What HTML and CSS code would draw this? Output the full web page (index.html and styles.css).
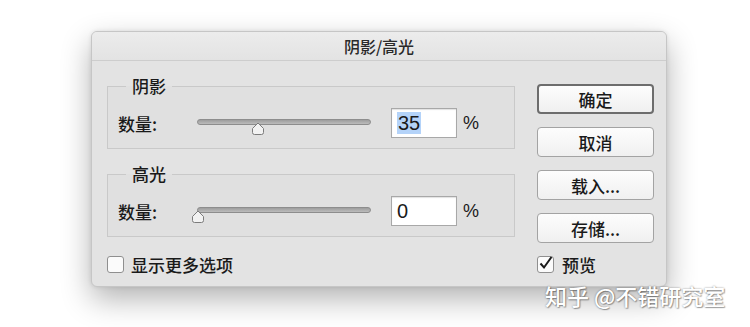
FILE: index.html
```html
<!DOCTYPE html>
<html lang="zh-CN">
<head>
    <meta charset="UTF-8">
    <title>阴影/高光</title>
    <link rel="stylesheet" href="styles.css">
</head>
<body>
    <div class="dialog">
        <div class="titlebar">阴影/高光</div>
        <div class="content">
            <div class="left">
                <fieldset class="group">
                    <legend>阴影</legend>
                    <div class="row">
                        <span class="label">数量:</span>
                        <div class="slider">
                            <div class="track"></div>
                            <svg class="thumb" style="left: 54.4px" width="14" height="14" viewBox="0 0 14 14">
                                <path d="M7 1 L12.5 6.5 V10.5 Q12.5 12.5 10.5 12.5 H3.5 Q1.5 12.5 1.5 10.5 V6.5 Z" fill="#f2f2f2" stroke="#7c7c7c" stroke-width="1"/>
                            </svg>
                        </div>
                        <div class="field"><span class="sel">35</span></div>
                        <span class="pct">%</span>
                    </div>
                </fieldset>

                <fieldset class="group second">
                    <legend>高光</legend>
                    <div class="row">
                        <span class="label">数量:</span>
                        <div class="slider">
                            <div class="track"></div>
                            <svg class="thumb" style="left: -6.5px" width="14" height="14" viewBox="0 0 14 14">
                                <path d="M7 1 L12.5 6.5 V10.5 Q12.5 12.5 10.5 12.5 H3.5 Q1.5 12.5 1.5 10.5 V6.5 Z" fill="#f2f2f2" stroke="#7c7c7c" stroke-width="1"/>
                            </svg>
                        </div>
                        <div class="field">0</div>
                        <span class="pct">%</span>
                    </div>
                </fieldset>

                <div class="check more">
                    <span class="box"></span>
                    <span>显示更多选项</span>
                </div>
            </div>

            <div class="right">
                <button class="btn default">确定</button>
                <button class="btn">取消</button>
                <button class="btn">载入...</button>
                <button class="btn">存储...</button>
                <div class="check preview">
                    <span class="box checked">
                        <svg width="17" height="17" viewBox="0 0 17 17">
                            <path d="M3.5 8.5 L7 12.5 L14.5 2" fill="none" stroke="#1a1a1a" stroke-width="2"/>
                        </svg>
                    </span>
                    <span>预览</span>
                </div>
            </div>
        </div>
    </div>

    <div class="watermark">知乎 @不错研究室</div>
</body>
</html>
```

FILE: styles.css
```css
body {
    margin: 0;
    height: 327px;
    overflow: hidden;
    background: #ffffff;
    font-family: "Noto Sans CJK SC", "Liberation Sans", sans-serif;
    font-weight: 500;
    color: #1a1a1a;
    position: relative;
}

.dialog {
    margin: 31px 0 0 91px;
    width: 576px;
    height: 256px;
    box-sizing: border-box;
    background: #e3e3e3;
    border: 1px solid #c6c6c6;
    border-radius: 6px;
    box-shadow: 0 12px 30px rgba(0, 0, 0, 0.3), 0 0 4px rgba(0, 0, 0, 0.1);
    overflow: hidden;
}

.titlebar {
    height: 28px;
    line-height: 28px;
    text-align: center;
    font-size: 16px;
    color: #2a2a2a;
    background: linear-gradient(#ececec, #e3e3e3);
    border-bottom: 1px solid #cdcdcd;
}

.content {
    display: flex;
    padding: 15px 0 0 15px;
}

.left {
    width: 408px;
}

.group {
    margin: 0;
    padding: 12px 0 10px 10px;
    border: 1px solid #c9c9c9;
    background: #e0e0e0;
}

.group.second {
    margin-top: 15px;
}

.group legend {
    margin-left: 8px;
    padding: 0 6px;
    font-size: 17px;
    line-height: 20px;
}

.row {
    display: flex;
    align-items: center;
    height: 30px;
}

.label {
    width: 79px;
    font-size: 17px;
}

.slider {
    position: relative;
    width: 174px;
    height: 30px;
}

.track {
    position: absolute;
    left: 0;
    right: 0;
    top: 11px;
    height: 6px;
    box-sizing: border-box;
    border: 1px solid #8d8d8d;
    border-radius: 3px;
    background: linear-gradient(#9d9d9d, #bcbcbc);
}

.thumb {
    position: absolute;
    top: 14px;
}

.field {
    margin-left: 20px;
    width: 66px;
    height: 30px;
    box-sizing: border-box;
    padding-left: 5px;
    border: 1px solid #a8a8a8;
    box-shadow: inset 0 1px 1px rgba(0, 0, 0, 0.12);
    background: #ffffff;
    font-family: "Liberation Sans", sans-serif;
    font-weight: 400;
    font-size: 20px;
    line-height: 28px;
}

.sel {
    background: #b4d3f9;
    padding: 0 1px;
}

.pct {
    margin-left: 6px;
    font-family: "Liberation Sans", sans-serif;
    font-weight: 400;
    font-size: 18px;
}

.check {
    display: flex;
    align-items: center;
    gap: 7px;
    font-size: 17px;
}

.check.more {
    margin-top: 15px;
}

.box {
    width: 17px;
    height: 17px;
    box-sizing: border-box;
    border: 1px solid #8f8f8f;
    border-radius: 3px;
    background: #fbfbfb;
    position: relative;
}

.box svg {
    position: absolute;
    left: -1px;
    top: -2px;
}

.right {
    margin-left: 22px;
    padding-top: 8px;
    display: flex;
    flex-direction: column;
    gap: 13px;
}

.btn {
    width: 117px;
    height: 30px;
    box-sizing: border-box;
    border: 1px solid #a3a3a3;
    border-radius: 4px;
    background: linear-gradient(#fdfdfd, #f0f0f0);
    font-family: inherit;
    font-weight: 500;
    font-size: 17px;
    color: #1a1a1a;
    padding: 0;
}

.btn.default {
    border: 2px solid #6d6d6d;
}

.check.preview {
    margin-top: -4px;
    gap: 8px;
}

.watermark {
    position: absolute;
    left: 545px;
    top: 279px;
    font-size: 22px;
    color: #ffffff;
    text-shadow: 0 0 2px rgba(0, 0, 0, 0.45), 1px 1px 1px rgba(0, 0, 0, 0.3);
    white-space: nowrap;
}
```
